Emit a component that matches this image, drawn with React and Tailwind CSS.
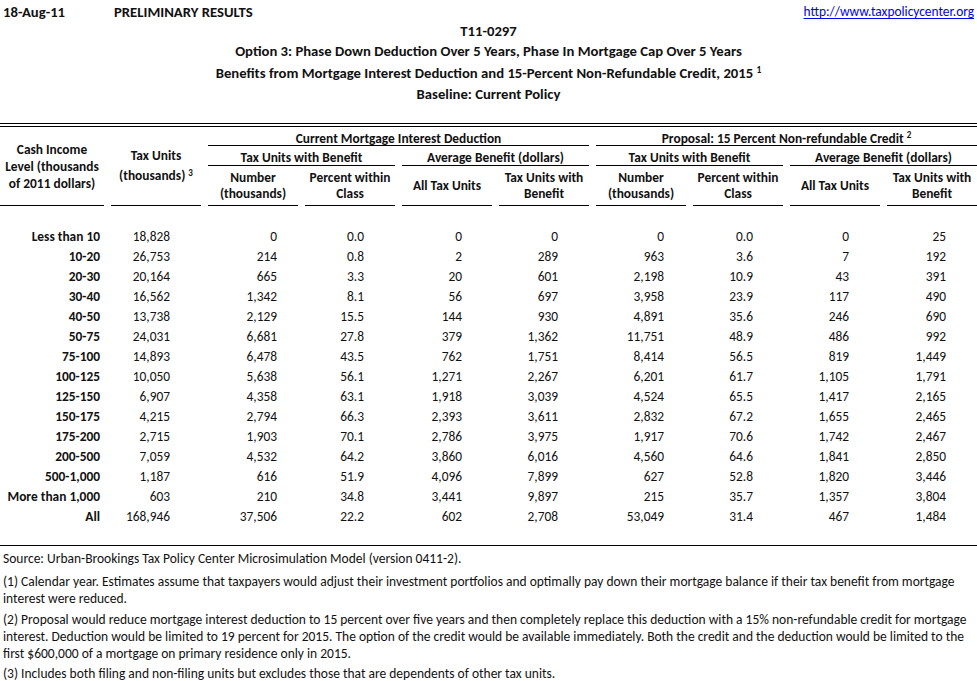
import React from "react";

const rows = [
  ["Less than 10", "18,828", "0", "0.0", "0", "0", "0", "0.0", "0", "25"],
  ["10-20", "26,753", "214", "0.8", "2", "289", "963", "3.6", "7", "192"],
  ["20-30", "20,164", "665", "3.3", "20", "601", "2,198", "10.9", "43", "391"],
  ["30-40", "16,562", "1,342", "8.1", "56", "697", "3,958", "23.9", "117", "490"],
  ["40-50", "13,738", "2,129", "15.5", "144", "930", "4,891", "35.6", "246", "690"],
  ["50-75", "24,031", "6,681", "27.8", "379", "1,362", "11,751", "48.9", "486", "992"],
  ["75-100", "14,893", "6,478", "43.5", "762", "1,751", "8,414", "56.5", "819", "1,449"],
  ["100-125", "10,050", "5,638", "56.1", "1,271", "2,267", "6,201", "61.7", "1,105", "1,791"],
  ["125-150", "6,907", "4,358", "63.1", "1,918", "3,039", "4,524", "65.5", "1,417", "2,165"],
  ["150-175", "4,215", "2,794", "66.3", "2,393", "3,611", "2,832", "67.2", "1,655", "2,465"],
  ["175-200", "2,715", "1,903", "70.1", "2,786", "3,975", "1,917", "70.6", "1,742", "2,467"],
  ["200-500", "7,059", "4,532", "64.2", "3,860", "6,016", "4,560", "64.6", "1,841", "2,850"],
  ["500-1,000", "1,187", "616", "51.9", "4,096", "7,899", "627", "52.8", "1,820", "3,446"],
  ["More than 1,000", "603", "210", "34.8", "3,441", "9,897", "215", "35.7", "1,357", "3,804"],
  ["All", "168,946", "37,506", "22.2", "602", "2,708", "53,049", "31.4", "467", "1,484"],
];

const cellPad = [
  "pr-[4px] font-bold",
  "pr-[31px]",
  "pr-[21px]",
  "pr-[31px]",
  "pr-[30px]",
  "pr-[31px]",
  "pr-[22px]",
  "pr-[30px]",
  "pr-[31px]",
  "pr-[31px]",
];

function Sub({ children }) {
  return (
    <div className="border-b border-black flex items-center justify-center text-center leading-[16px] font-bold">
      <div>{children}</div>
    </div>
  );
}

export default function App() {
  return (
    <div className="w-[977px] h-[681px] overflow-hidden bg-white text-[#111] text-[13.4px] font-[Carlito,Lato,sans-serif]">
      {/* Top area */}
      <div className="pt-[2px]">
        <div className="h-[20px] flex items-center">
          <div className="w-[114px] pl-[3px] font-bold text-[14.7px]">18-Aug-11</div>
          <div className="font-bold text-[14.7px]">PRELIMINARY RESULTS</div>
          <div className="ml-auto pr-[3px] text-[#0000ee] underline decoration-1 underline-offset-[2px]">
            http://www.taxpolicycenter.org
          </div>
        </div>
        <div className="h-[19px] flex items-center justify-center font-bold text-[14.7px]">T11-0297</div>
        <div className="h-[20px] flex items-center justify-center font-bold text-[14.7px]">
          Option 3: Phase Down Deduction Over 5 Years, Phase In Mortgage Cap Over 5 Years
        </div>
        <div className="h-[24px] flex items-center justify-center font-bold text-[14.7px]">
          <span>
            Benefits from Mortgage Interest Deduction and 15-Percent Non-Refundable Credit, 2015{" "}
            <sup className="text-[9.5px]">1</sup>
          </span>
        </div>
        <div className="h-[19px] flex items-center justify-center font-bold text-[14.7px]">Baseline: Current Policy</div>
        <div className="h-[19px]" />
      </div>

      {/* Double rule */}
      <div className="h-[4px] border-y border-black" />

      {/* Column headers */}
      <div className="grid grid-cols-[104px_repeat(9,90px)] grid-rows-[19px_20px_40px] gap-x-[7px] font-bold">
        <div className="row-span-3 border-b border-black flex items-center justify-center text-center leading-[17px]">
          <div>
            Cash Income
            <br />
            Level (thousands
            <br />
            of 2011 dollars)
          </div>
        </div>
        <div className="row-span-3 border-b border-black flex items-center justify-center text-center leading-[20px]">
          <div>
            Tax Units
            <br />
            (thousands) <sup className="text-[9px]">3</sup>
          </div>
        </div>
        <div className="col-span-4 border-b border-black flex items-center justify-center pt-[6px]">
          Current Mortgage Interest Deduction
        </div>
        <div className="col-span-4 border-b border-black flex items-center justify-center pt-[6px]">
          <span>
            Proposal: 15 Percent Non-refundable Credit <sup className="text-[9px]">2</sup>
          </span>
        </div>

        <div className="col-span-2 border-b border-black flex items-center justify-center pt-[5px]">
          Tax Units with Benefit
        </div>
        <div className="col-span-2 border-b border-black flex items-center justify-center pt-[5px]">
          Average Benefit (dollars)
        </div>
        <div className="col-span-2 border-b border-black flex items-center justify-center pt-[5px]">
          Tax Units with Benefit
        </div>
        <div className="col-span-2 border-b border-black flex items-center justify-center pt-[5px]">
          Average Benefit (dollars)
        </div>

        <Sub>
          Number
          <br />
          (thousands)
        </Sub>
        <Sub>
          Percent within
          <br />
          Class
        </Sub>
        <Sub>All Tax Units</Sub>
        <Sub>
          Tax Units with
          <br />
          Benefit
        </Sub>
        <Sub>
          Number
          <br />
          (thousands)
        </Sub>
        <Sub>
          Percent within
          <br />
          Class
        </Sub>
        <Sub>All Tax Units</Sub>
        <Sub>
          Tax Units with
          <br />
          Benefit
        </Sub>
      </div>

      {/* Data */}
      <div className="pt-[21px] pb-[18px]">
        {rows.map((r) => (
          <div key={r[0]} className="grid grid-cols-[104px_repeat(9,90px)] gap-x-[7px] h-[20px] items-center">
            {r.map((v, i) => (
              <div key={i} className={`text-right whitespace-nowrap ${cellPad[i]}`}>
                {v}
              </div>
            ))}
          </div>
        ))}
      </div>

      {/* Footnotes */}
      <div className="border-t border-black pt-[4px] pl-[3px] leading-[17px] text-[13.5px] whitespace-nowrap">
        <div>Source: Urban-Brookings Tax Policy Center Microsimulation Model (version 0411-2).</div>
        <div className="mt-[6px]">
          (1) Calendar year. Estimates assume that taxpayers would adjust their investment portfolios and optimally pay down their mortgage balance if their tax benefit from mortgage
          <br />
          interest were reduced.
        </div>
        <div className="mt-[4px]">
          (2) Proposal would reduce mortgage interest deduction to 15 percent over five years and then completely replace this deduction with a 15% non-refundable credit for mortgage
          <br />
          interest. Deduction would be limited to 19 percent for 2015. The option of the credit would be available immediately. Both the credit and the deduction would be limited to the
          <br />
          first $600,000 of a mortgage on primary residence only in 2015.
        </div>
        <div className="mt-[3px]">
          (3) Includes both filing and non-filing units but excludes those that are dependents of other tax units.
        </div>
      </div>
    </div>
  );
}
